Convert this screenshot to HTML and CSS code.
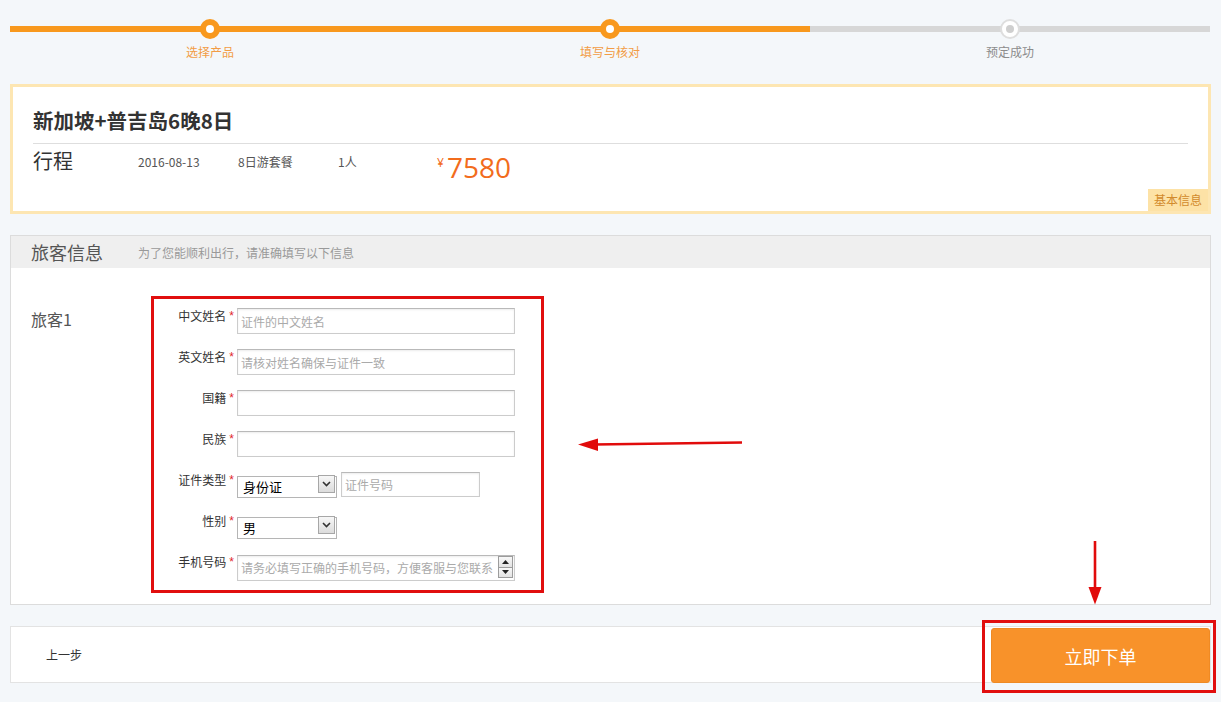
FILE: index.html
```html
<!DOCTYPE html>
<html lang="zh-CN">
<head>
<meta charset="utf-8">
<title>填写与核对</title>
<link rel="stylesheet" href="styles.css">
</head>
<body>
<div class="page">
  <div class="steps">
    <div class="step done"><div class="bar"></div><div class="dot"><span></span></div><div class="label">选择产品</div></div>
    <div class="step done"><div class="bar"></div><div class="dot"><span></span></div><div class="label">填写与核对</div></div>
    <div class="step todo"><div class="bar"></div><div class="dot"><span></span></div><div class="label">预定成功</div></div>
  </div>

  <div class="summary">
    <h1 class="title">新加坡+普吉岛6晚8日</h1>
    <div class="trip">
      <div class="trip-name">行程</div>
      <div class="trip-cell">2016-08-13</div>
      <div class="trip-cell">8日游套餐</div>
      <div class="trip-cell narrow">1人</div>
      <div class="price"><span class="yen">¥</span>7580</div>
    </div>
    <div class="badge">基本信息</div>
  </div>

  <div class="travelers">
    <div class="tv-head"><span class="tv-title">旅客信息</span><span class="tv-sub">为了您能顺利出行，请准确填写以下信息</span></div>
    <div class="tv-body">
      <div class="tv-name">旅客1</div>
      <div class="form">
        <div class="row"><label class="lbl">中文姓名<i>*</i></label><input class="txt" type="text" placeholder="证件的中文姓名"></div>
        <div class="row"><label class="lbl">英文姓名<i>*</i></label><input class="txt" type="text" placeholder="请核对姓名确保与证件一致"></div>
        <div class="row"><label class="lbl">国籍<i>*</i></label><input class="txt" type="text"></div>
        <div class="row"><label class="lbl">民族<i>*</i></label><input class="txt" type="text"></div>
        <div class="row"><label class="lbl">证件类型<i>*</i></label>
          <div class="sel"><select><option>身份证</option></select><span class="sel-btn"><svg width="9" height="6" viewBox="0 0 9 6"><path d="M1 1 L4.5 4.5 L8 1" fill="none" stroke="#333" stroke-width="1.6"/></svg></span></div>
          <input class="txt short" type="text" placeholder="证件号码">
        </div>
        <div class="row"><label class="lbl">性别<i>*</i></label>
          <div class="sel"><select><option>男</option></select><span class="sel-btn"><svg width="9" height="6" viewBox="0 0 9 6"><path d="M1 1 L4.5 4.5 L8 1" fill="none" stroke="#333" stroke-width="1.6"/></svg></span></div>
        </div>
        <div class="row"><label class="lbl">手机号码<i>*</i></label>
          <div class="phone"><input class="txt" type="text" placeholder="请务必填写正确的手机号码，方便客服与您联系"><span class="spin"><span class="spin-up"><svg width="7" height="4" viewBox="0 0 7 4"><path d="M0 4 L3.5 0 L7 4 Z" fill="#222"/></svg></span><span class="spin-down"><svg width="7" height="4" viewBox="0 0 7 4"><path d="M0 0 L3.5 4 L7 0 Z" fill="#222"/></svg></span></span></div>
        </div>
      </div>
    </div>
  </div>

  <div class="actions">
    <a class="prev">上一步</a>
    <div class="submit-wrap"><button class="submit" type="button">立即下单</button></div>
  </div>
</div>

<svg class="arrow arrow-left" width="180" height="24" viewBox="570 432 180 24">
  <path d="M742 442.5 L594 444.5" stroke="#e10b0b" stroke-width="2.6" fill="none"/>
  <path d="M578 444.5 L598 438.5 L598 451 Z" fill="#e10b0b"/>
</svg>
<svg class="arrow arrow-down" width="20" height="70" viewBox="1085 538 20 70">
  <path d="M1095 541 L1095 590" stroke="#e10b0b" stroke-width="2.6" fill="none"/>
  <path d="M1088.5 587 L1101.5 587 L1095 604.5 Z" fill="#e10b0b"/>
</svg>
</body>
</html>
```

FILE: styles.css
```css
* {
  box-sizing: border-box;
  margin: 0;
  padding: 0;
}

body {
  position: relative;
  width: 1221px;
  height: 702px;
  overflow: hidden;
  background: #f4f7fa;
  font-family: "Noto Sans CJK SC", "Liberation Sans", sans-serif;
  color: #333;
}

.page {
  padding: 0 10px;
}

/* progress steps */
.steps {
  display: flex;
}

.step {
  width: 400px;
  display: flex;
  flex-direction: column;
  align-items: center;
}

.bar {
  align-self: stretch;
  height: 6px;
  margin-top: 26px;
  background: #f8981d;
}

.step.todo .bar {
  background: #d7d7d7;
}

.dot {
  width: 20px;
  height: 20px;
  margin-top: -13px;
  border-radius: 50%;
  background: #f8981d;
  display: flex;
  align-items: center;
  justify-content: center;
}

.dot span {
  width: 8px;
  height: 8px;
  border-radius: 50%;
  background: #fff;
}

.step.todo .dot {
  background: #fff;
  border: 2px solid #dedede;
}

.step.todo .dot span {
  background: #cfcfcf;
}

.label {
  margin-top: 5px;
  font-size: 12px;
  line-height: 16px;
  color: #f29c45;
}

.step.todo .label {
  color: #8c8c8c;
}

/* summary card */
.summary {
  position: relative;
  margin-top: 24px;
  height: 130px;
  background: #fff;
  border: 3px solid #fde6b2;
  padding: 0 20px;
}

.title {
  padding: 19px 0 9px;
  font-size: 20.5px;
  line-height: 28px;
  font-weight: bold;
  color: #333;
  border-bottom: 1px solid #dedede;
}

.trip {
  display: flex;
  align-items: flex-start;
}

.trip-name {
  width: 105px;
  margin-top: 5px;
  font-size: 20px;
  line-height: 24px;
  color: #333;
}

.trip-cell {
  width: 100px;
  margin-top: 10px;
  font-size: 12px;
  line-height: 16px;
  color: #555;
}

.trip-cell.narrow {
  width: 99px;
}

.price {
  margin-top: 7px;
  font-family: "Open Sans", "Noto Sans CJK SC", sans-serif;
  font-size: 28px;
  line-height: 32px;
  color: #f26c1c;
}

.yen {
  display: inline-block;
  vertical-align: top;
  margin: 4px 3px 0 0;
  font-size: 12px;
  line-height: 16px;
}

.badge {
  position: absolute;
  right: 0;
  bottom: 0;
  width: 60px;
  height: 22px;
  background: #fde2a6;
  color: #d28a2c;
  font-size: 12px;
  line-height: 22px;
  text-align: center;
}

/* travelers card */
.travelers {
  margin-top: 21px;
  height: 370px;
  background: #fff;
  border: 1px solid #dcdcdc;
}

.tv-head {
  display: flex;
  align-items: center;
  height: 32px;
  padding-left: 20px;
  background: #efefef;
}

.tv-title {
  width: 107px;
  font-size: 18px;
  line-height: 32px;
  color: #555;
}

.tv-sub {
  font-size: 12px;
  color: #999;
}

.tv-body {
  display: flex;
  align-items: flex-start;
  padding-top: 28px;
}

.tv-name {
  width: 140px;
  padding-left: 20px;
  margin-top: 13px;
  font-size: 16px;
  line-height: 20px;
  color: #555;
}

.form {
  width: 393px;
  border: 3px solid #e10e0e;
  padding: 9px 0 10px;
}

.row {
  display: flex;
  align-items: flex-start;
  height: 26px;
  margin-bottom: 15px;
}

.row:last-child {
  margin-bottom: 0;
}

.lbl {
  width: 83px;
  padding-right: 3px;
  text-align: right;
  font-size: 12px;
  line-height: 16px;
  color: #333;
}

.lbl i {
  font-style: normal;
  font-family: "Liberation Sans", sans-serif;
  color: #e0262b;
  margin-left: 3px;
  position: relative;
  top: -1px;
}

.txt {
  width: 278px;
  height: 26px;
  padding: 0 3px;
  border: 1px solid #cccccc;
  border-top-color: #b9b9b9;
  box-shadow: inset 0 1px 2px rgba(0, 0, 0, 0.08);
  font-family: "Noto Sans CJK SC", sans-serif;
  font-size: 12px;
  color: #333;
  outline: none;
  background: #fff;
}

.txt::placeholder {
  color: #aaa;
}

.txt.short {
  width: 139px;
  height: 25px;
  margin-left: 4px;
}

.sel {
  position: relative;
  width: 100px;
  height: 22px;
  margin-top: 1px;
}

.sel select {
  width: 100%;
  height: 100%;
  -webkit-appearance: none;
  appearance: none;
  border: 1px solid #b5b5b5;
  background: #fff;
  padding-left: 5px;
  font-family: "Noto Sans CJK SC", sans-serif;
  font-size: 13px;
  color: #000;
  border-radius: 0;
  outline: none;
}

.sel-btn {
  position: absolute;
  right: 2px;
  top: 2px;
  width: 17px;
  height: 18px;
  border: 1px solid #a7a7a7;
  background: linear-gradient(#f7f7f7, #dcdcdc);
  display: flex;
  align-items: center;
  justify-content: center;
}

.phone {
  position: relative;
}

.spin {
  position: absolute;
  right: 2px;
  top: 2px;
  width: 15px;
  height: 22px;
  display: flex;
  flex-direction: column;
}

.spin-up,
.spin-down {
  flex: 1;
  border: 1px solid #9c9c9c;
  background: linear-gradient(#f8f8f8, #e2e2e2);
  display: flex;
  align-items: center;
  justify-content: center;
}

.spin-down {
  border-top: none;
}

/* bottom actions */
.actions {
  display: flex;
  align-items: center;
  justify-content: space-between;
  margin-top: 21px;
  height: 57px;
  background: #fff;
  border: 1px solid #e3e3e3;
}

.prev {
  padding-left: 35px;
  font-size: 12px;
  color: #333;
}

.submit-wrap {
  align-self: stretch;
  margin: -7px -6px -11px 0;
  border: 3px solid #e10e0e;
  padding: 5px 3px 7px 6px;
  display: flex;
}

.submit {
  width: 219px;
  height: 55px;
  border: 1px solid #ef8a24;
  border-radius: 3px;
  background: #f8922a;
  color: #fff;
  font-family: "Noto Sans CJK SC", sans-serif;
  font-size: 18px;
}

/* annotation arrows */
.arrow {
  position: absolute;
}

.arrow-left {
  left: 570px;
  top: 432px;
}

.arrow-down {
  left: 1085px;
  top: 538px;
}
```
